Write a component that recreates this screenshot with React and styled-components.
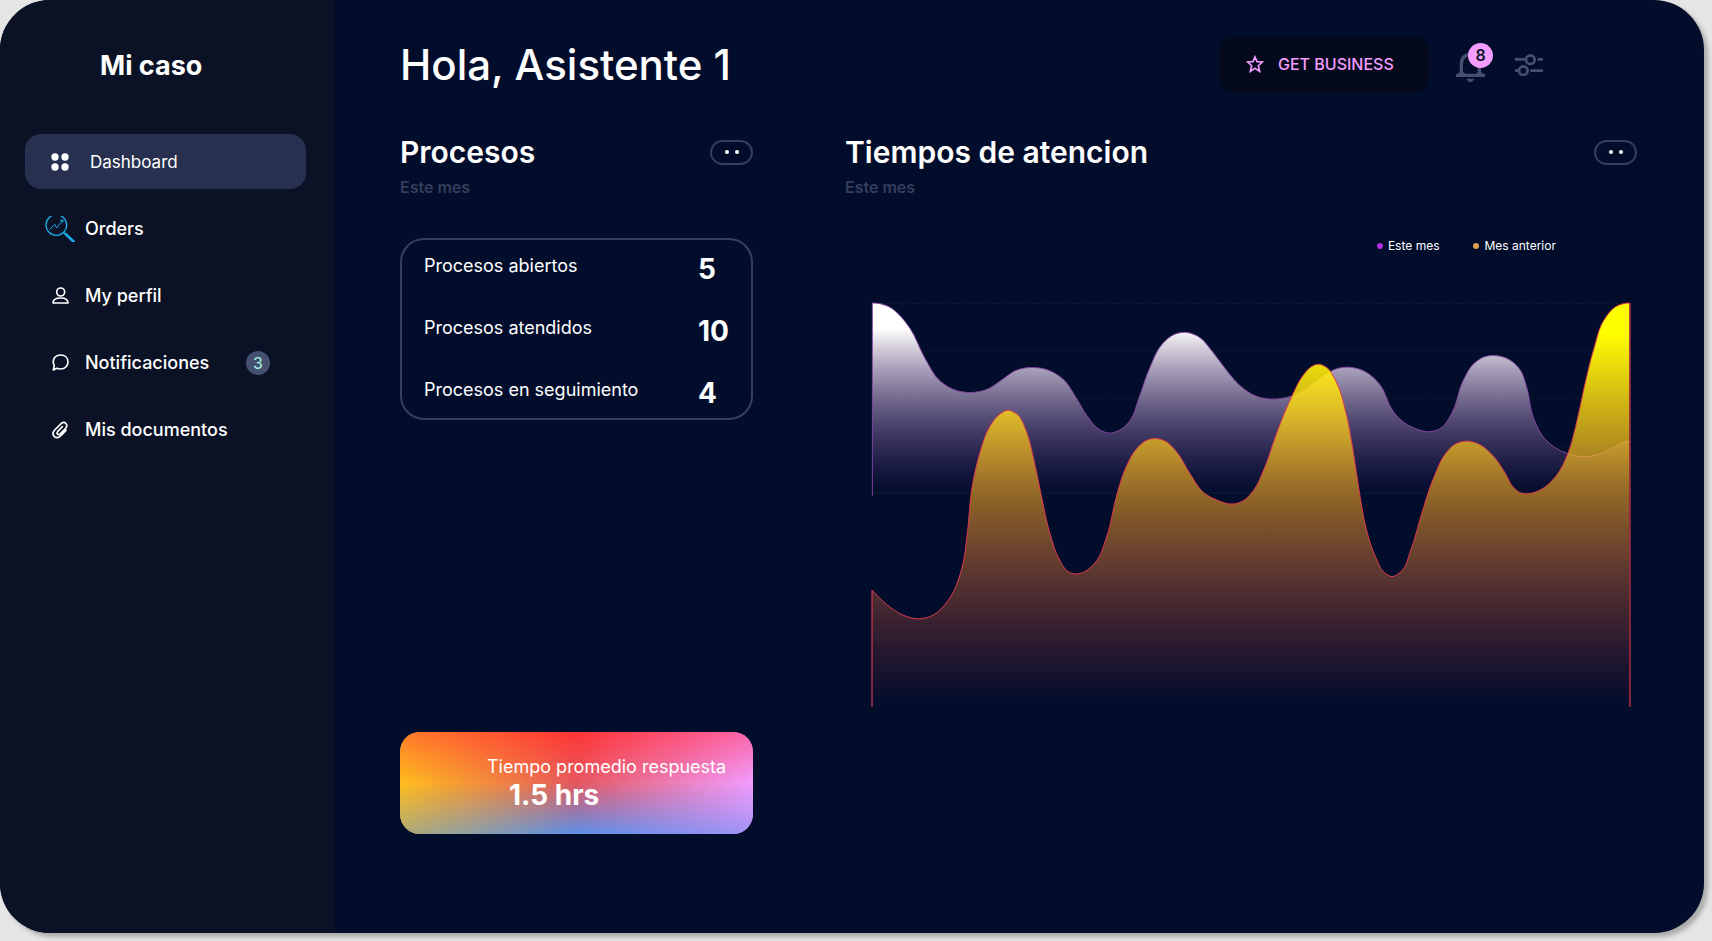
import React from "react";
import styled, { createGlobalStyle } from "styled-components";

const GlobalStyle = createGlobalStyle`
  *, *::before, *::after { box-sizing: border-box; }
  body {
    margin: 0;
    background: #e5e5e5;
    color: #fff;
    font-family: Inter, "Liberation Sans", sans-serif;
  }
  h1, h2, p, dl, dd, ul { margin: 0; padding: 0; }
  button { font: inherit; cursor: pointer; }
`;

const Frame = styled.div`
  display: flex;
  min-height: calc(100vh - 8px);
  margin: 0 8px 8px 0;
  overflow: hidden;
  border-radius: 50px;
  background: #020d2c;
  box-shadow: 4px 4px 4px rgba(0, 0, 0, 0.25);
`;

/* ---------- sidebar ---------- */

const Sidebar = styled.aside`
  flex: 0 0 335px;
  padding: 48px 29px 48px 25px;
  background: #0b1226;
`;

const Brand = styled.p`
  padding-left: 75px;
  margin-bottom: 50px;
  font-size: 27px;
  font-weight: 700;
  line-height: 36px;
`;

const NavList = styled.ul`
  display: grid;
  gap: 12px;
  list-style: none;
`;

const NavLink = styled.a`
  display: flex;
  align-items: center;
  gap: ${(p) => (p.$active ? "14px" : "9px")};
  height: 55px;
  padding: 0 36px 0 19px;
  border-radius: 16px;
  background: ${(p) => (p.$active ? "#27314f" : "transparent")};
  color: #fff;
  font-size: ${(p) => (p.$active ? "17px" : "18px")};
  font-weight: ${(p) => (p.$active ? 400 : 500)};
  line-height: 24px;
  text-decoration: none;
`;

const IconSlot = styled.span`
  display: flex;
  flex: 0 0 32px;
  justify-content: center;
`;

const Count = styled.span`
  display: grid;
  place-items: center;
  width: 24px;
  height: 24px;
  margin-left: auto;
  border-radius: 50%;
  background: #454f70;
  color: #a5f5dd;
  font-size: 16px;
  font-weight: 400;
`;

/* ---------- header ---------- */

const Main = styled.main`
  display: flex;
  flex: 1;
  flex-direction: column;
  min-width: 0;
  padding: 37px 67px 99px 65px;
`;

const Header = styled.header`
  display: flex;
  align-items: center;
  justify-content: space-between;
  height: 55px;
  margin-bottom: 42px;
`;

const Greeting = styled.h1`
  font-size: 42px;
  font-weight: 500;
  line-height: 52px;
`;

const Actions = styled.div`
  display: flex;
  align-items: center;
  margin-right: 94px;
`;

const UpgradeButton = styled.button`
  display: flex;
  align-items: center;
  gap: 14px;
  width: 211px;
  height: 55px;
  margin-right: 26px;
  padding: 0 26px 2px 27px;
  border: 0;
  border-radius: 16px;
  background: #040a1b;
  color: #f29dff;
  font-size: 16px;
  font-weight: 500;
  white-space: nowrap;
`;

const IconButton = styled.button`
  position: relative;
  display: flex;
  padding: 0;
  border: 0;
  background: none;
  color: #454f70;

  & + & { margin-left: 30px; }
`;

const AlertBadge = styled.span`
  position: absolute;
  top: -5px;
  left: 12px;
  display: grid;
  place-items: center;
  width: 25px;
  height: 25px;
  border-radius: 50%;
  background: #f29dff;
  color: #101428;
  font-size: 16px;
  font-weight: 600;
`;

/* ---------- panels ---------- */

const Panels = styled.div`
  display: grid;
  flex: 1;
  grid-template-columns: 353px minmax(0, 1fr);
  gap: 92px;
`;

const Panel = styled.section`
  display: flex;
  flex-direction: column;
`;

const PanelHead = styled.div`
  display: flex;
  align-items: center;
  justify-content: space-between;
`;

const PanelTitle = styled.h2`
  font-size: 30px;
  font-weight: 600;
  line-height: 36px;
`;

const PanelSub = styled.p`
  margin: 5px 0 39px;
  color: #343e5d;
  font-size: 16px;
  font-weight: 600;
  line-height: 24px;
`;

const MoreButton = styled.button`
  display: flex;
  align-items: center;
  justify-content: center;
  gap: 6px;
  width: 43px;
  height: 25px;
  padding: 0;
  border: 2px solid #343e5d;
  border-radius: 13px;
  background: none;
`;

const MoreDot = styled.span`
  width: 4px;
  height: 4px;
  border-radius: 50%;
  background: #fff;
`;

const StatCard = styled.dl`
  display: grid;
  align-content: start;
  height: 182px;
  padding-top: 2px;
  border: 2px solid #343e5d;
  border-radius: 24px;
`;

const StatRow = styled.div`
  display: grid;
  grid-template-columns: 274px 1fr;
  height: 62px;
  padding: 8px 0 0 22px;
`;

const StatLabel = styled.dt`
  font-size: 18px;
  line-height: 32px;
`;

const StatValue = styled.dd`
  padding-top: 3px;
  font-size: 28px;
  font-weight: 700;
  line-height: 32px;
`;

const ResponseCard = styled.div`
  position: relative;
  isolation: isolate;
  height: 102px;
  margin-top: auto;
  padding: 23px 0 0 87px;
  overflow: hidden;
  border-radius: 20px;
  background: linear-gradient(90deg, #ffbe1c, #e65860 50%, #f29dff);

  &::before,
  &::after {
    content: "";
    position: absolute;
    inset: 0;
    z-index: -1;
  }
  &::before {
    background: linear-gradient(90deg, #ff7a2a, #ff3535 50%, #fa66a8);
    mask-image: linear-gradient(#000, transparent 50%);
  }
  &::after {
    background: linear-gradient(90deg, #b0aa78, #5b90e8 50%, #a292f4);
    mask-image: linear-gradient(transparent 50%, #000);
  }
`;

const ResponseLabel = styled.p`
  font-size: 18px;
  line-height: 24px;
`;

const ResponseValue = styled.p`
  padding-left: 22px;
  font-size: 28px;
  font-weight: 700;
  line-height: 32px;
`;

/* ---------- chart ---------- */

const Legend = styled.ul`
  display: flex;
  justify-content: flex-end;
  gap: 34px;
  padding-right: 81px;
  margin-bottom: 48px;
  list-style: none;
`;

const LegendItem = styled.li`
  display: flex;
  align-items: center;
  gap: 5px;
  font-size: 12px;
  line-height: 16px;

  &::before {
    content: "";
    width: 6px;
    height: 6px;
    border-radius: 50%;
    background: ${(p) => p.$color};
  }
`;

const ChartBox = styled.div`
  padding: 0 6px 0 26px;

  svg { display: block; width: 100%; height: auto; }
`;

const CURRENT = [
  [3, 3], [20, 4], [57, 16], [90, 44], [117, 79], [162, 169], [207, 237], [232, 255], [257, 266],
  [302, 272], [347, 263], [397, 231], [432, 207], [477, 197], [527, 203], [577, 232],
  [617, 289], [649, 342], [687, 384], [717, 394], [747, 385], [777, 358], [805, 289],
  [837, 199], [877, 124], [912, 97], [942, 91], [982, 103], [1027, 151], [1077, 217],
  [1107, 250], [1157, 283], [1209, 292], [1262, 283], [1312, 257], [1357, 224], [1397, 201],
  [1437, 196], [1482, 208], [1527, 246], [1569, 329], [1597, 359], [1637, 381],
  [1677, 390], [1712, 379], [1745, 334], [1779, 236], [1812, 184], [1842, 165],
  [1872, 161], [1917, 173], [1952, 207], [1969, 254], [1992, 354], [2022, 409],
  [2057, 439], [2092, 455], [2142, 465], [2187, 457], [2237, 434], [2277, 418],
];

const PREVIOUS = [
  [3, 866], [47, 909], [97, 941], [144, 952], [182, 943], [237, 889], [272, 804],
  [289, 699], [304, 554], [327, 454], [357, 374], [387, 337], [412, 325], [437, 336],
  [467, 390], [487, 464], [512, 584], [537, 694], [567, 776], [592, 810], [615, 817],
  [642, 810], [677, 779], [707, 709], [740, 574], [767, 494], [802, 436], [827, 416],
  [852, 410], [882, 417], [917, 449], [957, 514], [1002, 575], [1037, 594], [1087, 607],
  [1115, 599], [1147, 569], [1182, 499], [1217, 399], [1264, 284], [1297, 222],
  [1322, 195], [1344, 187], [1369, 197], [1397, 239], [1427, 334], [1447, 439],
  [1469, 584], [1487, 679], [1517, 769], [1542, 813], [1565, 825], [1592, 810],
  [1622, 744], [1652, 644], [1692, 524], [1727, 454], [1757, 426], [1790, 418],
  [1822, 425], [1867, 460], [1902, 509], [1932, 559], [1952, 574], [1972, 576],
  [2012, 564], [2057, 524], [2094, 454], [2117, 374], [2142, 259], [2172, 139],
  [2202, 54], [2237, 14], [2278, 3],
];

const distance = (a, b) => Math.hypot(a[0] - b[0], a[1] - b[1]);

/* Slope at each point, from its neighbours, weighted by how near they are. */
function tangent(points, i) {
  const prev = points[i - 1];
  const here = points[i];
  const next = points[i + 1];
  if (!prev) return [1, 0].map((_, k) => (next[k] - here[k]) / distance(here, next));
  if (!next) return [1, 0];
  const before = distance(prev, here);
  const after = distance(here, next);
  return [0, 1].map(
    (k) =>
      (((here[k] - prev[k]) / before) * after + ((next[k] - here[k]) / after) * before) /
      (before + after)
  );
}

/* Smooth curve through every point, as cubic Béziers. */
function curve(points) {
  let d = `M${points[0][0]} ${points[0][1]}`;
  for (let i = 0; i < points.length - 1; i += 1) {
    const from = points[i];
    const to = points[i + 1];
    const reach = distance(from, to) / 3;
    const out = tangent(points, i);
    const into = tangent(points, i + 1);
    d += `C${from[0] + out[0] * reach} ${from[1] + out[1] * reach} ${
      to[0] - into[0] * reach} ${to[1] - into[1] * reach} ${to[0]} ${to[1]}`;
  }
  return d;
}

function AttentionChart() {
  const current = curve(CURRENT);
  const previous = curve(PREVIOUS);
  return (
    <svg viewBox="0 0 2283 1218" role="img" aria-label="Tiempos de atencion">
      <defs>
        <linearGradient id="fillCurrent" gradientUnits="userSpaceOnUse" x1="0" y1="79" x2="0" y2="578">
          <stop offset="0" stopColor="#fff" />
          <stop offset="1" stopColor="#7b3fa0" stopOpacity="0" />
        </linearGradient>
        <linearGradient id="fillPrevious" gradientUnits="userSpaceOnUse" x1="0" y1="94" x2="0" y2="1210">
          <stop offset="0" stopColor="#ff0" />
          <stop offset="1" stopColor="#ff4050" stopOpacity="0" />
        </linearGradient>
      </defs>
      <path d={`${current}V582H3Z`} fill="url(#fillCurrent)" />
      <path d={current} fill="none" stroke="#8546a0" strokeWidth="3" />
      <path d="M4 3V582" stroke="#7c409a" strokeWidth="3" />
      <path d={`${previous}V1218H3Z`} fill="url(#fillPrevious)" />
      <path d={previous} fill="none" stroke="#e03a4c" strokeWidth="3" />
      <path d="M3 866V1218M2280 3V1218" stroke="#d93648" strokeOpacity="0.6" strokeWidth="6" />
      <g stroke="#d99a4e" strokeOpacity="0.1" strokeWidth="3" strokeDasharray="9 6">
        <path d="M3 4H2278M3 147H2278M3 289H2278M3 433H2278" />
        <path d="M3 574H2278" strokeDasharray="none" />
      </g>
    </svg>
  );
}

/* ---------- icons ---------- */

const GridIcon = () => (
  <svg width="18" height="18" viewBox="0 0 54 54" fill="#fff" aria-hidden="true">
    <circle cx="12" cy="12" r="11" />
    <circle cx="42" cy="12" r="11" />
    <circle cx="12" cy="42" r="11" />
    <circle cx="42" cy="42" r="11" />
  </svg>
);

const OrdersIcon = () => (
  <svg width="30" height="26" viewBox="0 0 90 78" fill="none" stroke="#1da9e2" aria-hidden="true">
    <circle cx="34" cy="27" r="31" strokeWidth="4" />
    <path d="M14 41 29 25l6 11 18-23M46 13l8-1-1 8" strokeWidth="3" />
    <path d="m56 49 6 6" strokeWidth="5" />
    <path d="m61 53 27 26" strokeWidth="8" />
  </svg>
);

const UserIcon = () => (
  <svg width="17" height="17" viewBox="0 0 51 51" fill="none" stroke="#fff" strokeWidth="5" strokeLinejoin="round" aria-hidden="true">
    <circle cx="26" cy="15" r="12" />
    <path d="M3 48c0-10 9-15 23-15s22 5 22 15Z" />
  </svg>
);

const ChatIcon = () => (
  <svg width="17" height="17" viewBox="0 0 51 51" fill="none" stroke="#fff" strokeWidth="5" strokeLinejoin="round" aria-hidden="true">
    <path d="M7 35C-2 18 9 3 26 3c14 0 22 9 22 21S39 45 26 45c-4 0-8-1-11-2L4 48Z" />
  </svg>
);

const ClipIcon = () => (
  <svg width="17" height="18" viewBox="0 0 51 54" fill="none" stroke="#fff" strokeWidth="5" strokeLinecap="round" aria-hidden="true">
    <path d="M31 17 17 32c-5 6 2 12 7 7l17-17C50 11 38-1 28 7L8 27C-4 40 10 58 24 46l18-18" />
  </svg>
);

const StarIcon = () => (
  <svg width="18" height="18" viewBox="0 0 54 54" fill="none" stroke="currentColor" strokeWidth="5" aria-hidden="true">
    <path d="m27 6 6 14 16 1-12 11 4 17-14-9-14 9 4-17L5 21l16-1Z" />
  </svg>
);

const BellIcon = () => (
  <svg width="29" height="34" viewBox="0 -6 87 102" aria-hidden="true">
    <path d="M16 74V45c0-20 10-31 27-31s27 11 27 31v29M43 2v14" fill="none" stroke="currentColor" strokeWidth="10" />
    <path d="M0 81V73q8-1 11-6h11l6 4h32l6-4h10q3 5 11 6v8ZM32 86h22q-3 10-11 10t-11-10Z" fill="currentColor" />
  </svg>
);

const SlidersIcon = () => (
  <svg width="28" height="22" viewBox="0 0 84 66" fill="none" stroke="currentColor" strokeWidth="8" aria-hidden="true">
    <circle cx="46" cy="17" r="13" />
    <circle cx="25" cy="50" r="13" />
    <path d="M0 16h34M68 16h16M0 50h12M46 50h38" />
  </svg>
);

const NAV = [
  { label: "Dashboard", Icon: GridIcon, active: true },
  { label: "Orders", Icon: OrdersIcon },
  { label: "My perfil", Icon: UserIcon },
  { label: "Notificaciones", Icon: ChatIcon, count: 3 },
  { label: "Mis documentos", Icon: ClipIcon },
];

const STATS = [
  ["Procesos abiertos", 5],
  ["Procesos atendidos", 10],
  ["Procesos en seguimiento", 4],
];

function PanelHeading({ title }) {
  return (
    <>
      <PanelHead>
        <PanelTitle>{title}</PanelTitle>
        <MoreButton type="button" aria-label={`Opciones de ${title}`}>
          <MoreDot />
          <MoreDot />
        </MoreButton>
      </PanelHead>
      <PanelSub>Este mes</PanelSub>
    </>
  );
}

export default function App() {
  return (
    <>
      <GlobalStyle />
      <Frame>
        <Sidebar>
          <Brand>Mi caso</Brand>
          <nav>
            <NavList>
              {NAV.map(({ label, Icon, active, count }) => (
                <li key={label}>
                  <NavLink href="#" $active={active} aria-current={active ? "page" : undefined}>
                    <IconSlot><Icon /></IconSlot>
                    {label}
                    {count && <Count>{count}</Count>}
                  </NavLink>
                </li>
              ))}
            </NavList>
          </nav>
        </Sidebar>
        <Main>
          <Header>
            <Greeting>Hola, Asistente 1</Greeting>
            <Actions>
              <UpgradeButton type="button">
                <StarIcon />
                GET BUSINESS
              </UpgradeButton>
              <IconButton type="button" aria-label="Notificaciones">
                <BellIcon />
                <AlertBadge>8</AlertBadge>
              </IconButton>
              <IconButton type="button" aria-label="Ajustes">
                <SlidersIcon />
              </IconButton>
            </Actions>
          </Header>
          <Panels>
            <Panel>
              <PanelHeading title="Procesos" />
              <StatCard>
                {STATS.map(([label, value]) => (
                  <StatRow key={label}>
                    <StatLabel>{label}</StatLabel>
                    <StatValue>{value}</StatValue>
                  </StatRow>
                ))}
              </StatCard>
              <ResponseCard>
                <ResponseLabel>Tiempo promedio respuesta</ResponseLabel>
                <ResponseValue>1.5 hrs</ResponseValue>
              </ResponseCard>
            </Panel>
            <Panel>
              <PanelHeading title="Tiempos de atencion" />
              <Legend>
                <LegendItem $color="#b52fe8">Este mes</LegendItem>
                <LegendItem $color="#dca04c">Mes anterior</LegendItem>
              </Legend>
              <ChartBox>
                <AttentionChart />
              </ChartBox>
            </Panel>
          </Panels>
        </Main>
      </Frame>
    </>
  );
}
